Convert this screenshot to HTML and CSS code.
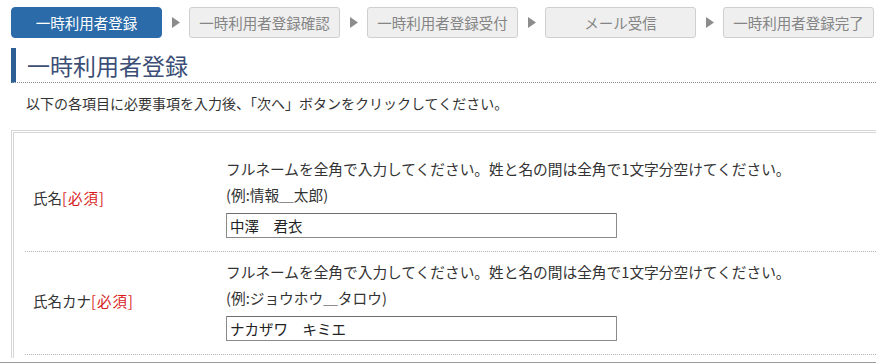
FILE: index.html
```html
<!DOCTYPE html>
<html lang="ja">
  <head>
    <meta charset="UTF-8" />
    <title>一時利用者登録</title>
    <link rel="stylesheet" href="styles.css">
  </head>
  <body>
    <div class="page">
      <!-- progress steps -->
      <ol class="steps">
        <li class="step step-active">一時利用者登録</li>
        <li class="step-arrow"><svg width="8" height="11" viewBox="0 0 8 11"><path d="M0 0 L8 5.5 L0 11 Z" fill="#8c8c8c"/></svg></li>
        <li class="step">一時利用者登録確認</li>
        <li class="step-arrow"><svg width="8" height="11" viewBox="0 0 8 11"><path d="M0 0 L8 5.5 L0 11 Z" fill="#8c8c8c"/></svg></li>
        <li class="step">一時利用者登録受付</li>
        <li class="step-arrow"><svg width="8" height="11" viewBox="0 0 8 11"><path d="M0 0 L8 5.5 L0 11 Z" fill="#8c8c8c"/></svg></li>
        <li class="step">メール受信</li>
        <li class="step-arrow"><svg width="8" height="11" viewBox="0 0 8 11"><path d="M0 0 L8 5.5 L0 11 Z" fill="#8c8c8c"/></svg></li>
        <li class="step">一時利用者登録完了</li>
      </ol>

      <h2 class="page-title">一時利用者登録</h2>
      <p class="intro">以下の各項目に必要事項を入力後、「次へ」ボタンをクリックしてください。</p>

      <div class="form-box">
        <div class="form-row">
          <div class="form-label">氏名<span class="required">[必須]</span></div>
          <div class="form-field">
            <div class="hint">フルネームを全角で入力してください。姓と名の間は全角で1文字分空けてください。</div>
            <div class="hint">(例:情報＿太郎)</div>
            <input type="text" class="text-input" value="中澤　君衣" />
          </div>
        </div>
        <div class="form-row">
          <div class="form-label">氏名カナ<span class="required">[必須]</span></div>
          <div class="form-field">
            <div class="hint">フルネームを全角で入力してください。姓と名の間は全角で1文字分空けてください。</div>
            <div class="hint">(例:ジョウホウ＿タロウ)</div>
            <input type="text" class="text-input" value="ナカザワ　キミエ" />
          </div>
        </div>
      </div>
    </div>
    <div class="bottom-bar"></div>
  </body>
</html>
```

FILE: styles.css
```css
body {
  margin: 0;
  overflow: hidden;
  background-color: #ffffff;
  color: #333;
  font-family: "Noto Sans CJK JP", "Noto Sans", sans-serif;
}

.page {
  padding: 7px 0 0 11px;
}

/* progress steps */
.steps {
  display: flex;
  list-style: none;
  margin: 0;
  padding: 0;
}

.step {
  box-sizing: border-box;
  width: 151px;
  height: 31px;
  line-height: 29px;
  text-align: center;
  font-size: 14.5px;
  color: #858585;
  background-color: #efefef;
  border: 1px solid #cfcfcf;
  border-radius: 3px;
  white-space: nowrap;
}

.step-active {
  color: #fff;
  background-color: #2b6ba9;
  border-color: #2b6ba9;
  border-radius: 4px;
}

.step-arrow {
  width: 27px;
  display: flex;
  align-items: center;
  justify-content: center;
}

/* title */
.page-title {
  margin: 10px 0 0 0;
  height: 34px;
  line-height: 34px;
  padding-left: 11px;
  font-size: 23px;
  font-weight: normal;
  color: #3b4e75;
  border-left: 5px solid #2d5f94;
  border-bottom: 1px dotted #8a8a8a;
}

.intro {
  margin: 10px 0 0 15px;
  font-size: 14px;
  line-height: 20px;
}

/* form */
.form-box {
  margin: 17px -20px 0 0;
  padding: 16px 0 3px 0;
  border-top: 3px double #d6d6d6;
  border-left: 3px double #d6d6d6;
}

.form-row {
  display: grid;
  grid-template-columns: 201px 1fr;
  align-items: center;
  margin-left: 11px;
  padding: 7px 0 13px 0;
  border-bottom: 1px dotted #b5b5b5;
}

.form-label {
  padding-left: 8px;
  font-size: 14.5px;
}

.required {
  color: #d81c1c;
  letter-spacing: 1px;
}

.form-field {
  font-size: 14.7px;
}

.hint {
  line-height: 26px;
  white-space: nowrap;
}

.text-input {
  box-sizing: border-box;
  display: block;
  width: 391px;
  height: 25px;
  margin-top: 5px;
  padding: 0 3px;
  font-family: inherit;
  font-size: 14.5px;
  color: #222;
  border: 1px solid #8a8a8a;
  border-top-color: #6f6f6f;
  border-radius: 1px;
  outline: none;
}

.bottom-bar {
  margin-top: 4px;
  height: 4px;
  background-color: #9a9a9a;
}
```
